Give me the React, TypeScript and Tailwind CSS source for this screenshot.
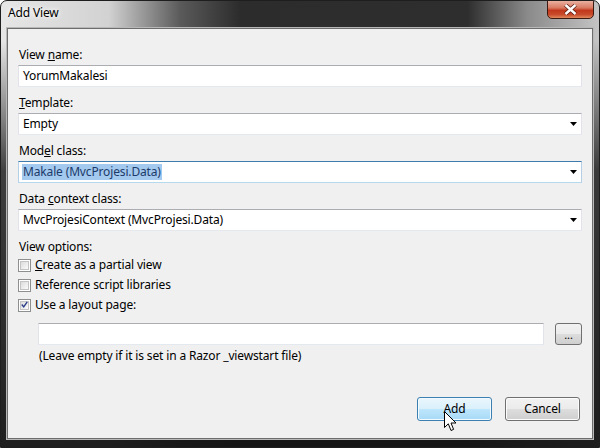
import React from 'react';

const font = { fontFamily: '"Noto Sans", "Segoe UI", sans-serif' };

const Arrow = () => (
  <svg width="7" height="4" viewBox="0 0 7 4" className="shrink-0">
    <path d="M0 0 H7 L3.5 4 Z" fill="#000" />
  </svg>
);

const Label = ({ children }: { children: React.ReactNode }) => (
  <div className="h-4 leading-4 text-[12px] text-black pl-px">{children}</div>
);

const TextBox = ({ value, className = '' }: { value?: string; className?: string }) => (
  <div
    className={`h-[22px] bg-white border border-[#abadb3] border-l-[#e2e3ea] border-r-[#e2e3ea] border-b-[#e3e9ef] flex items-center px-[4px] text-[12px] ${className}`}
  >
    {value}
  </div>
);

const Combo = ({ value, focused, selected }: { value: string; focused?: boolean; selected?: boolean }) => (
  <div
    className={`h-[22px] bg-white border flex items-center justify-between pl-[3px] pr-[4px] text-[12px] ${
      focused
        ? 'border-[#3d7bad] border-l-[#b5cfe7] border-r-[#b5cfe7] border-b-[#b7d9ed]'
        : 'border-[#abadb3] border-l-[#e2e3ea] border-r-[#e2e3ea] border-b-[#e3e9ef]'
    }`}
  >
    {selected ? (
      <span className="bg-[#a3c9ee] text-[#1c3b6a] px-px leading-[16px]">{value}</span>
    ) : (
      <span className="px-px">{value}</span>
    )}
    <Arrow />
  </div>
);

const Check = ({ checked, label }: { checked?: boolean; label: React.ReactNode }) => (
  <div className="flex items-center h-5 gap-[4px]">
    <div className="w-[13px] h-[13px] border border-[#8e8f8f] bg-white p-px">
      <div className="w-full h-full bg-gradient-to-br from-[#dcdcdc] to-[#fbfbfb] border border-[#c4c4c4] flex items-center justify-center">
        {checked && (
          <svg width="9" height="9" viewBox="0 0 9 9" className="-mt-px">
            <path d="M1 4.5 L3.5 7.5 L8 1" fill="none" stroke="#2b3f8a" strokeWidth="1.8" />
          </svg>
        )}
      </div>
    </div>
    <span className="text-[12px] text-black">{label}</span>
  </div>
);

const Cursor = () => (
  <svg width="14" height="22" viewBox="0 0 14 22" className="absolute left-[444px] top-[411px]">
    <path
      d="M0.5 0.5 L0.5 16.5 L4.3 12.8 L7 19.5 L9.6 18.4 L7 12 L12 12 Z"
      fill="#fff"
      stroke="#000"
      strokeWidth="1"
      strokeLinejoin="miter"
    />
  </svg>
);

export default function App() {
  return (
    <div className="w-[600px] h-[448px] bg-white relative tracking-[-0.15px]" style={font}>
      <div className="w-[600px] h-[448px] rounded-t-[7px] border border-[#1e1e1e] bg-[linear-gradient(180deg,rgba(34,34,34,0)_40px,rgba(34,34,34,0.85)_170px,rgba(20,20,20,0.95)_100%),linear-gradient(90deg,#e6e6e6_0%,#d2d2d2_18%,#5a5a5a_30%,#2c2c2c_40%,#2e2e2e_78%,#8a8a8a_88%,#c4c4c4_100%)] flex flex-col overflow-hidden">
        {/* title bar */}
        <div className="h-[27px] shrink-0 flex items-start justify-between relative">
          <div className="pl-[7px] pt-[4px] text-[12px] text-black leading-[16px] [text-shadow:0_0_6px_#fff,0_0_4px_#fff]">
            Add View
          </div>
          <div className="w-[47px] h-[19px] mr-[5px] -mt-px rounded-b-[5px] border border-[#3b1a12] bg-[linear-gradient(180deg,#eab0a0_0%,#d87a62_40%,#c2381c_55%,#c84b2c_80%,#e08a5e_100%)] flex items-center justify-center">
            <svg width="13" height="11" viewBox="0 0 13 11">
              <path d="M1.5 1 L11.5 10 M11.5 1 L1.5 10" stroke="#5a1d10" strokeWidth="4" />
              <path d="M1.5 1 L11.5 10 M11.5 1 L1.5 10" stroke="#fff" strokeWidth="2.4" />
            </svg>
          </div>
        </div>

        {/* body */}
        <div className="flex-1 mx-[6px] mb-[8px] border border-[#6d6d6d] shadow-[0_0_0_1px_#b8b8b8] bg-[#f0f0f0] flex flex-col px-[10px] pt-[18px] pb-[17px] text-black">
          <div className="flex flex-col gap-[2px]">
            <Label>
              View <span className="underline">n</span>ame:
            </Label>
            <TextBox value="YorumMakalesi" />
          </div>
          <div className="flex flex-col gap-[2px] mt-[8px]">
            <Label>
              <span className="underline">T</span>emplate:
            </Label>
            <Combo value="Empty" />
          </div>
          <div className="flex flex-col gap-[2px] mt-[8px]">
            <Label>
              Mod<span className="underline">e</span>l class:
            </Label>
            <Combo value="Makale (MvcProjesi.Data)" focused selected />
          </div>
          <div className="flex flex-col gap-[2px] mt-[8px]">
            <Label>
              Data <span className="underline">c</span>ontext class:
            </Label>
            <Combo value="MvcProjesiContext (MvcProjesi.Data)" />
          </div>

          <div className="mt-[8px]">
            <Label>View options:</Label>
            <div className="flex flex-col">
              <Check label={<><span className="underline">C</span>reate as a partial view</>} />
              <Check label="Reference script libraries" />
              <Check checked label="Use a layout page:" />
            </div>
          </div>

          <div className="flex items-center gap-[11px] pl-[20px] mt-[8px]">
            <TextBox className="flex-1" />
            <button className="w-[27px] h-[22px] rounded-[3px] border border-[#707070] bg-[linear-gradient(180deg,#f2f2f2_0%,#ebebeb_50%,#dddddd_51%,#cfcfcf_100%)] text-[11px] leading-none pb-[4px] flex items-end justify-center">
              ...
            </button>
          </div>
          <div className="pl-[21px] mt-[3px] text-[12px] leading-4">
            (Leave empty if it is set in a Razor _viewstart file)
          </div>

          <div className="mt-auto flex justify-end gap-[13px] pr-[2px]">
            <button className="w-[75px] h-[24px] rounded-[3px] border border-[#3c7fb1] bg-[linear-gradient(180deg,#eaf6fd_0%,#d9f0fc_50%,#bee6fd_51%,#a7d9f5_100%)] text-[12px] shadow-[inset_0_0_0_1px_#f4fbff]">
              Add
            </button>
            <button className="w-[75px] h-[24px] rounded-[3px] border border-[#707070] bg-[linear-gradient(180deg,#f2f2f2_0%,#ebebeb_50%,#dddddd_51%,#cfcfcf_100%)] text-[12px] shadow-[inset_0_0_0_1px_#fcfcfc]">
              Cancel
            </button>
          </div>
        </div>
      </div>
      <Cursor />
    </div>
  );
}
